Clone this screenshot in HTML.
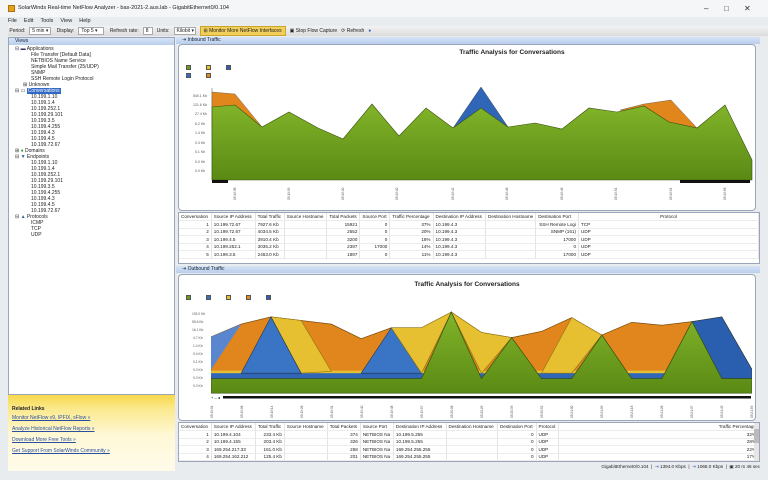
<!DOCTYPE html>
<html><head><meta charset="utf-8"><style>
*{margin:0;padding:0;box-sizing:border-box}
body{width:768px;height:480px;background:#e9ecef;font-family:"Liberation Sans",sans-serif;color:#222;position:relative;overflow:hidden;font-size:5px}
.abs{position:absolute}
.title{left:0;top:0;width:768px;height:17px;background:#f5f6f7;font-size:5.5px;line-height:17px;padding-left:18px}
.title .ic{position:absolute;left:8px;top:5px;width:7px;height:7px;background:#e8a21a;border:1px solid #b07010}
.wc{position:absolute;top:0;font-size:8px;color:#333}
.menu{left:8px;top:17px;font-size:5.5px;line-height:8px;word-spacing:2px}
.tb{left:8px;top:26px;width:760px;height:10px;background:linear-gradient(#f2f2f2,#dcdcdc);font-size:5px;line-height:10px;white-space:nowrap}
.tb span{margin-right:4px}
.sel{display:inline-block;background:#fff;border:1px solid #aaa;height:8px;line-height:7px;padding:0 2px;vertical-align:top;margin-top:1px}
.left{left:8px;top:37px;width:167px;height:358px;background:#fff;border:1px solid #9aa6b8}
.hdr{height:7px;background:linear-gradient(#d7e4f7,#b9cdec);font-size:5px;line-height:7px;padding-left:6px;color:#123}
.tree{font-size:5px;line-height:6px;padding-left:6px;white-space:nowrap}
.tree div{height:6px}
.i1{padding-left:8px}.i2{padding-left:16px}
.rel{left:8px;top:395px;width:167px;height:76px;background:linear-gradient(#f7d84a 0,#fbe98e 14px,#fff8d6 40px,#fffbea);font-size:5px}
.rel a{display:block;color:#2a4fa0;text-decoration:underline;position:absolute;left:4px}
.panel{background:#fff;border:1px solid #9aa6b8}
.ctitle{font-weight:bold;font-size:6.5px;text-align:center}
table{border-collapse:collapse;font-size:4.6px;width:100%}
td,th{font-weight:normal;height:7.5px;padding:0 2px;white-space:nowrap;border-right:1px solid #e4e4e4}
tr td{border-bottom:1px solid #ececec}
.r{text-align:right}
.leg{display:inline-block;width:5px;height:5px;margin-right:15px;border:1px solid #555}
.xl{position:absolute;font-size:3.5px;transform:rotate(-90deg);transform-origin:left top;white-space:nowrap;color:#444}
.status{left:176px;top:462px;width:584px;height:10px;font-size:4.6px;line-height:10px;text-align:right}
</style></head><body>
<div class="abs title"><div class="ic"></div>SolarWinds Real-time NetFlow Analyzer - bas-2021-2.aus.lab - GigabitEthernet0/0.104
<span class="wc" style="left:704px">–</span><span class="wc" style="left:724px">□</span><span class="wc" style="left:744px">✕</span></div>
<div class="abs menu">File &nbsp;Edit &nbsp;Tools &nbsp;View &nbsp;Help</div>
<div class="abs tb">&nbsp;<span>Period:</span><span class="sel" style="width:22px">5 min ▾</span> <span>Display:</span><span class="sel" style="width:26px">Top 5 ▾</span> <span>Refresh rate:</span><span class="sel" style="width:10px">8</span><span>Units:</span><span class="sel" style="width:22px">Kilobit ▾</span><span style="background:#f1cf5a;padding:1px 3px;border:1px solid #c9a52a">⊞ Monitor More NetFlow Interfaces</span><span>▣ Stop Flow Capture</span><span>⟳ Refresh</span><span style="color:#36c">●</span></div>

<div class="abs left"><div class="hdr">Views</div>
<div class="tree" style="margin-top:1px">
<div><span style="color:#336">⊟ ▬</span> Applications</div>
<div class="i2">File Transfer [Default Data]</div><div class="i2">NETBIOS Name Service</div><div class="i2">Simple Mail Transfer (25/UDP)</div><div class="i2">SNMP</div><div class="i2">SSH Remote Login Protocol</div><div class="i1">⊞ Unknown</div>
<div>⊟ ▭ <span style="background:#3169c6;color:#fff;padding:0 1px">Conversations</span></div>
<div class="i2">10.199.1.10</div><div class="i2">10.199.1.4</div><div class="i2">10.199.252.1</div><div class="i2">10.199.29.101</div><div class="i2">10.199.3.5</div><div class="i2">10.199.4.255</div><div class="i2">10.199.4.3</div><div class="i2">10.199.4.5</div><div class="i2">10.199.72.67</div>
<div>⊞ <span style="color:#3a3">●</span> Domains</div><div>⊟ <span style="color:#36a">▼</span> Endpoints</div>
<div class="i2">10.199.1.10</div><div class="i2">10.199.1.4</div><div class="i2">10.199.252.1</div><div class="i2">10.199.29.101</div><div class="i2">10.199.3.5</div><div class="i2">10.199.4.255</div><div class="i2">10.199.4.3</div><div class="i2">10.199.4.5</div><div class="i2">10.199.72.67</div>
<div>⊟ <span style="color:#36a">▲</span> Protocols</div><div class="i2">ICMP</div><div class="i2">TCP</div><div class="i2">UDP</div>
</div></div>
<div class="abs rel"><div style="position:absolute;left:4px;top:11px;font-weight:bold">Related Links</div>
<a style="top:20px">Monitor NetFlow v9, IPFIX, sFlow »</a><a style="top:31px">Analyze Historical NetFlow Reports »</a><a style="top:42px">Download More Free Tools »</a><a style="top:53px">Get Support From SolarWinds Community »</a></div>

<!-- Inbound -->
<div class="abs" style="left:176px;top:37px;width:584px;height:7px"><div class="hdr">⇥ Inbound Traffic</div></div>
<div class="abs panel" style="left:178px;top:44px;width:578px;height:167px;border-radius:4px">
<div class="ctitle" style="margin-top:4px;margin-left:90px">Traffic Analysis for Conversations</div>
<div style="position:absolute;left:7px;top:20px"><span class="leg" style="background:#6a9a20"></span><span class="leg" style="background:#e8c030"></span><span class="leg" style="background:#2f5fb0"></span></div>
<div style="position:absolute;left:7px;top:28px"><span class="leg" style="background:#3a6cc0"></span><span class="leg" style="background:#e08a20"></span></div>
</div>
<svg class="abs" style="left:0;top:0" width="768" height="480">
<g font-size="3.5" fill="#555" font-family="Liberation Sans">
<text x="193" y="97">540.1 Kb</text><text x="193" y="106">121.6 Kb</text><text x="195" y="115">27.4 Kb</text><text x="195" y="125">6.2 Kb</text><text x="195" y="134">1.4 Kb</text><text x="195" y="144">0.3 Kb</text><text x="195" y="153">0.1 Kb</text><text x="195" y="163">0.0 Kb</text><text x="195" y="172">0.0 Kb</text></g>
<line x1="212" y1="88" x2="212" y2="180" stroke="#555" stroke-width=".5"/>
<polygon points="212,92 235,94 262,127 212,127" fill="#e0861c" stroke="#555" stroke-width=".4"/>
<polygon points="453,128 481,87 508,127" fill="#2f66b8" stroke="#333" stroke-width=".4"/>
<polygon points="620,110 644,104 671,100 697,128 669,122" fill="#e0861c" stroke="#555" stroke-width=".4"/>
<defs><linearGradient id="g" x1="0" y1="0" x2="0" y2="1"><stop offset="0" stop-color="#82b42a"/><stop offset="1" stop-color="#5a8a14"/></linearGradient></defs>
<polygon points="212,107 235,105 262,127 289,112 318,128 343,139 372,104 399,136 426,108 453,128 481,108 508,127 535,123 562,129 589,108 617,112 644,106 669,122 697,128 725,105 752,160 752,180 212,180" fill="url(#g)" stroke="#3a5010" stroke-width=".6"/>
<rect x="212" y="180" width="16" height="3" fill="#111"/><rect x="680" y="180" width="70" height="3" fill="#111"/>
<g font-size="3.2" fill="#555">
<text transform="translate(236,200) rotate(-90)">05:19:38</text><text transform="translate(290,200) rotate(-90)">05:19:39</text><text transform="translate(344,200) rotate(-90)">05:19:40</text><text transform="translate(398,200) rotate(-90)">05:19:40</text><text transform="translate(454,200) rotate(-90)">05:19:42</text><text transform="translate(508,200) rotate(-90)">05:19:46</text><text transform="translate(563,200) rotate(-90)">05:19:48</text><text transform="translate(617,200) rotate(-90)">05:19:51</text><text transform="translate(672,200) rotate(-90)">05:19:54</text><text transform="translate(726,200) rotate(-90)">05:19:56</text></g>

<!-- outbound chart -->
<g font-size="3.3" fill="#555"><text x="192" y="315">192.0 Kb</text><text x="192" y="323">55.6 Kb</text><text x="192" y="331">16.1 Kb</text><text x="193" y="339">4.7 Kb</text><text x="193" y="347">1.4 Kb</text><text x="193" y="355">0.4 Kb</text><text x="193" y="363">0.1 Kb</text><text x="193" y="371">0.0 Kb</text><text x="193" y="379">0.0 Kb</text><text x="193" y="387">0.0 Kb</text></g>
<svg x="211" y="286" width="541" height="109" viewBox="93 0 1434 300" preserveAspectRatio="none">
<polygon points="93,140 173,105 252,85 332,95 412,105 491,145 571,115 651,115 730,72 810,128 890,142 969,125 1049,87 1129,135 1208,100 1288,108 1368,98 1447,85 1527,230 1527,295 93,295" fill="#e0861c" stroke="#7a5010" stroke-width="2"/>
<rect x="93" y="233" width="1434" height="8" fill="#e6c030"/>
<rect x="93" y="240" width="1434" height="16" fill="#2f66b8"/>
<polygon points="93,140 173,105 93,230" fill="#5a86d0"/>
<polygon points="252,85 332,95 412,235 332,240" fill="#e6c030" stroke="#8a7010" stroke-width="1.5"/>
<polygon points="173,240 252,85 332,240" fill="#3a74c4" stroke="#234" stroke-width="1.5"/>
<polygon points="491,240 571,115 651,240" fill="#3a74c4" stroke="#234" stroke-width="1.5"/>
<polygon points="571,115 651,115 730,72 651,240" fill="#e6c030" stroke="#8a7010" stroke-width="1.5"/>
<polygon points="730,72 810,128 890,142 810,240" fill="#e6c030" stroke="#8a7010" stroke-width="1.5"/>
<polygon points="969,240 1049,87 1129,135 1049,240" fill="#e6c030" stroke="#8a7010" stroke-width="1.5"/>
<polygon points="1368,98 1447,85 1527,230 1527,255 1447,255" fill="#2a5fb0" stroke="#234" stroke-width="1.5"/>
<polygon points="93,255 651,255 730,72 810,255 890,142 969,255 1049,255 1129,135 1208,255 1288,255 1368,98 1447,255 1527,255 1527,295 93,295" fill="url(#g)" stroke="#3a5010" stroke-width="2"/>
</svg>
<rect x="211" y="396" width="540" height="2.5" fill="#111"/><rect x="211" y="395" width="12" height="4" fill="#fff"/><text x="211" y="399" font-size="4">+ – ◂</text>
<g font-size="3.2" fill="#555">
<text transform="translate(213,418) rotate(-90)">05:19:04</text><text transform="translate(243,418) rotate(-90)">05:19:06</text><text transform="translate(273,418) rotate(-90)">05:19:14</text><text transform="translate(303,418) rotate(-90)">05:19:26</text><text transform="translate(333,418) rotate(-90)">05:19:31</text><text transform="translate(363,418) rotate(-90)">05:19:40</text><text transform="translate(393,418) rotate(-90)">05:19:48</text><text transform="translate(423,418) rotate(-90)">05:19:57</text><text transform="translate(453,418) rotate(-90)">05:20:06</text><text transform="translate(483,418) rotate(-90)">05:20:25</text><text transform="translate(513,418) rotate(-90)">05:20:33</text><text transform="translate(543,418) rotate(-90)">05:20:52</text><text transform="translate(573,418) rotate(-90)">05:21:00</text><text transform="translate(603,418) rotate(-90)">05:21:09</text><text transform="translate(633,418) rotate(-90)">05:21:18</text><text transform="translate(663,418) rotate(-90)">05:21:26</text><text transform="translate(693,418) rotate(-90)">05:21:37</text><text transform="translate(723,418) rotate(-90)">05:21:45</text><text transform="translate(753,418) rotate(-90)">05:21:59</text></g>
</svg>

<div class="abs panel" style="left:178px;top:212px;width:582px;height:52px">
<table><tr><td>Conversation</td><td>Source IP Address</td><td>Total Traffic</td><td>Source Hostname</td><td>Total Packets</td><td>Source Port</td><td>Traffic Percentage</td><td>Destination IP Address</td><td style="width:50px">Destination Hostname</td><td>Destination Port</td><td style="width:180px;text-align:center">Protocol</td></tr>
<tr><td class="r">1</td><td>10.199.72.67</td><td>7927.6 Kb</td><td></td><td class="r">15921</td><td class="r">0</td><td class="r">37%</td><td>10.199.4.3</td><td></td><td class="r">SSH Remote Logi</td><td>TCP</td></tr>
<tr><td class="r">2</td><td>10.199.72.67</td><td>4034.5 Kb</td><td></td><td class="r">2552</td><td class="r">0</td><td class="r">20%</td><td>10.199.4.3</td><td></td><td class="r">SNMP (161)</td><td>UDP</td></tr>
<tr><td class="r">3</td><td>10.199.4.5</td><td>3910.4 Kb</td><td></td><td class="r">3200</td><td class="r">0</td><td class="r">18%</td><td>10.199.4.3</td><td></td><td class="r">17000</td><td>UDP</td></tr>
<tr><td class="r">4</td><td>10.199.252.1</td><td>3035.2 Kb</td><td></td><td class="r">2397</td><td class="r">17000</td><td class="r">14%</td><td>10.199.4.3</td><td></td><td class="r">0</td><td>UDP</td></tr>
<tr><td class="r">5</td><td>10.199.3.5</td><td>2463.0 Kb</td><td></td><td class="r">1897</td><td class="r">0</td><td class="r">11%</td><td>10.199.4.3</td><td></td><td class="r">17000</td><td>UDP</td></tr></table></div>

<div class="abs" style="left:176px;top:266px;width:584px;height:7px"><div class="hdr">⇥ Outbound Traffic</div></div>
<div class="abs panel" style="left:178px;top:274px;width:578px;height:147px;border-radius:4px;z-index:-1">
<div class="ctitle" style="margin-top:6px">Traffic Analysis for Conversations</div>
<div style="position:absolute;left:7px;top:20px"><span class="leg" style="background:#6a9a20"></span><span class="leg" style="background:#3a6cc0"></span><span class="leg" style="background:#e8c030"></span><span class="leg" style="background:#e08a20"></span><span class="leg" style="background:#2f5fb0"></span></div></div>

<div class="abs panel" style="left:178px;top:422px;width:582px;height:40px;overflow:hidden">
<table><tr><td>Conversation</td><td>Source IP Address</td><td>Total Traffic</td><td>Source Hostname</td><td>Total Packets</td><td>Source Port</td><td>Destination IP Address</td><td>Destination Hostname</td><td>Destination Port</td><td>Protocol</td><td class="r" style="width:200px">Traffic Percentage</td></tr>
<tr><td class="r">1</td><td>10.199.4.104</td><td class="r">233.4 Kb</td><td></td><td class="r">374</td><td>NETBIOS Na</td><td>10.199.5.255</td><td></td><td class="r">0</td><td>UDP</td><td class="r">32%</td></tr>
<tr><td class="r">2</td><td>10.199.4.155</td><td class="r">203.4 Kb</td><td></td><td class="r">326</td><td>NETBIOS Na</td><td>10.199.5.255</td><td></td><td class="r">0</td><td>UDP</td><td class="r">28%</td></tr>
<tr><td class="r">3</td><td>169.254.217.33</td><td class="r">161.0 Kb</td><td></td><td class="r">258</td><td>NETBIOS Na</td><td>169.254.255.255</td><td></td><td class="r">0</td><td>UDP</td><td class="r">22%</td></tr>
<tr><td class="r">4</td><td>169.254.162.212</td><td class="r">125.4 Kb</td><td></td><td class="r">201</td><td>NETBIOS Na</td><td>169.254.255.255</td><td></td><td class="r">0</td><td>UDP</td><td class="r">17%</td></tr></table></div>
<div class="abs" style="left:754px;top:423px;width:5px;height:38px;background:#e6e6e6"><div style="margin-top:6px;height:14px;background:#bbb"></div></div>
<div class="abs status">GigabitEthernet0/0.104 &nbsp;|&nbsp; <span style="color:#36c">⇥</span> 1394.0 Kbps &nbsp;|&nbsp; <span style="color:#36c">⇥</span> 1068.0 Kbps &nbsp;|&nbsp; ▣ 20 m 46 sec</div>
</body></html>
